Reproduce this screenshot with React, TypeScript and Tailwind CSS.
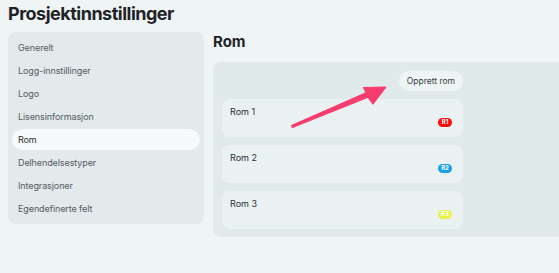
import React from "react";

const navItems = [
  "Generelt",
  "Logg-innstillinger",
  "Logo",
  "Lisensinformasjon",
  "Rom",
  "Delhendelsestyper",
  "Integrasjoner",
  "Egendefinerte felt",
];

const rooms = [
  { name: "Rom 1", code: "R1", color: "bg-[#ff0a0a]" },
  { name: "Rom 2", code: "R2", color: "bg-[#1a9ff0]" },
  { name: "Rom 3", code: "R3", color: "bg-[#e6f24a]" },
];

export default function App() {
  return (
    <main
      className="relative w-[559px] h-[273px] overflow-hidden bg-[#eff5f5] text-[#1f2328] px-2 pt-[2px]"
      style={{ fontFamily: "Inter, 'Noto Sans', sans-serif" }}
    >
      {/* HEADER */}
      <h1 className="text-[18px] leading-[24px] font-bold tracking-[-0.5px] mb-[6px]">
        Prosjektinnstillinger
      </h1>

      <div className="flex gap-[9px] items-start">
        {/* SIDEBAR */}
        <nav className="w-[196px] shrink-0 bg-[#e2eaeb] rounded-[8px] px-1 py-[5px] flex flex-col gap-[2px]">
          {navItems.map((item) => (
            <div
              key={item}
              className={
                item === "Rom"
                  ? "h-[21px] flex items-center px-[6px] rounded-full bg-[#f6fafa] text-[9px] tracking-[-0.1px] text-[#2a2e33]"
                  : "h-[21px] flex items-center px-[6px] text-[9px] tracking-[-0.1px] text-[#555b61]"
              }
            >
              {item}
            </div>
          ))}
        </nav>

        {/* CONTENT */}
        <section className="flex flex-col">
          <h2 className="text-[15px] leading-[18px] font-bold mt-[1px] mb-[11px]">
            Rom
          </h2>

          <div className="w-[360px] bg-[#e1eaeb] rounded-[8px] pl-[9px] pt-[9px] pb-[8px]">
            <div className="w-[241px] flex flex-col items-end gap-[8px]">
              <button className="h-[20px] px-[8px] rounded-full bg-[#eef4f4] text-[8.5px] text-[#3a3f44]">
                Opprett rom
              </button>

              {rooms.map((room) => (
                <div
                  key={room.code}
                  className="w-full h-[38px] rounded-[8px] bg-[#eaf1f2] flex justify-between pl-[8px] pr-[11px] pt-[7px]"
                >
                  <span className="text-[9px] leading-[12px] text-[#2a2e33]">
                    {room.name}
                  </span>
                  <span
                    className={`${room.color} self-center mt-[1px] h-[9px] w-[14px] rounded-full flex items-center justify-center text-[6px] font-bold text-white leading-none`}
                  >
                    {room.code}
                  </span>
                </div>
              ))}
            </div>
          </div>
        </section>
      </div>

      {/* ANNOTATION ARROW */}
      <svg
        className="absolute left-0 top-0 pointer-events-none"
        width="559"
        height="273"
        viewBox="0 0 559 273"
      >
        <polygon
          points="291.6,125.6 366,92.7 363.5,87.5 386,87 373,104 368,97.3 292.4,127.4"
          fill="#f73d70"
          stroke="#f73d70"
          strokeWidth="1.2"
          strokeLinejoin="round"
        />
      </svg>
    </main>
  );
}
